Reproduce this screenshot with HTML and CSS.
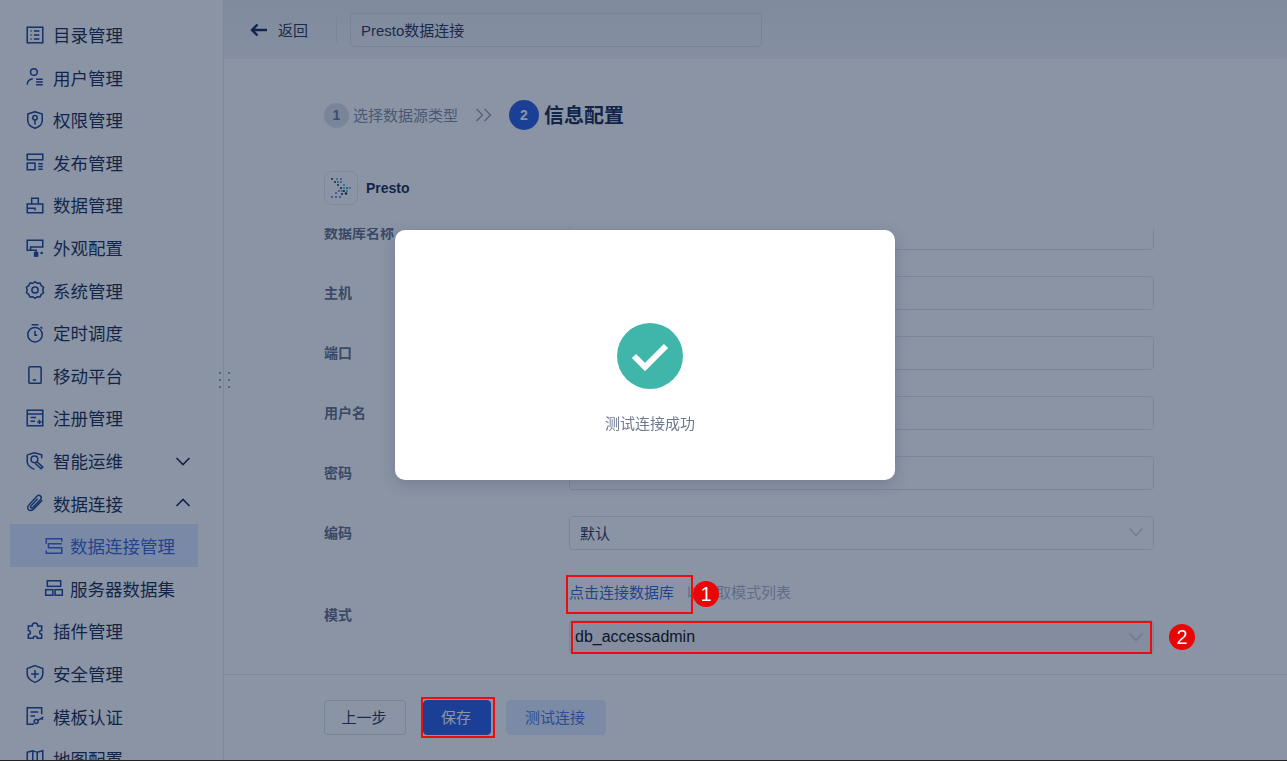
FILE: index.html
```html
<!DOCTYPE html>
<html lang="zh-CN">
<head>
    <meta charset="UTF-8">
    <title>Presto数据连接</title>
    <link rel="stylesheet" href="styles.css">
</head>
<body>
    <div class="app">
        <!-- Left menu -->
        <aside class="sidebar">
            <div class="nav-item"><svg class="nav-icon" viewBox="0 0 18 18"><rect x="2" y="2" width="14" height="14"/><path d="M5 5.500h1M8 5.500h5M5 9h1M8 9h5M5 12.500h1M8 12.500h5"/></svg>目录管理</div>
            <div class="nav-item"><svg class="nav-icon" viewBox="0 0 18 18"><circle cx="8" cy="4.500" r="3"/><path d="M2 16c0-3 2-5 5-5.500M10 11h6M10 13.500h6M10 16h6"/></svg>用户管理</div>
            <div class="nav-item"><svg class="nav-icon" viewBox="0 0 18 18"><path d="M9 1.500l6.500 2.200v6c0 3.300-3 5.600-6.500 6.800-3.500-1.200-6.500-3.500-6.500-6.800v-6z"/><circle cx="9" cy="7" r="2"/><path d="M9 9v4"/></svg>权限管理</div>
            <div class="nav-item"><svg class="nav-icon" viewBox="0 0 18 18"><rect x="2" y="2" width="14" height="5"/><rect x="2" y="10" width="7" height="6"/><path d="M12 10.500h4M12 13h4M12 15.500h4"/></svg>发布管理</div>
            <div class="nav-item"><svg class="nav-icon" viewBox="0 0 18 18"><path d="M2 8h14v8H2zM6 8V3h6v5M2 12h7v2"/></svg>数据管理</div>
            <div class="nav-item"><svg class="nav-icon" viewBox="0 0 18 18"><path d="M2 2h14v6H5v3H2zM5 11h5v2"/><path class="solid" d="M8 12.500h4V17H8z"/><circle class="solid" cx="15" cy="13.500" r="1.200"/></svg>外观配置</div>
            <div class="nav-item"><svg class="nav-icon" viewBox="0 0 18 18"><path d="M9 1.500l2 1.500 2.500-.2 1.200 2.300 2 1.500-.7 2.400.7 2.400-2 1.500-1.200 2.300-2.500-.2-2 1.500-2-1.500-2.500.2-1.200-2.300-2-1.500.7-2.400-.7-2.400 2-1.500 1.200-2.300 2.500.2z"/><circle cx="9" cy="9" r="2.800"/></svg>系统管理</div>
            <div class="nav-item"><svg class="nav-icon" viewBox="0 0 18 18"><circle cx="9" cy="10.500" r="6.500"/><path d="M6 1.500h6M9 7v4h2M14 3.500l1.500 1.500"/></svg>定时调度</div>
            <div class="nav-item"><svg class="nav-icon" viewBox="0 0 18 18"><rect x="3.500" y="1.500" width="11" height="15" rx="1"/><path d="M7 13.500h3"/></svg>移动平台</div>
            <div class="nav-item"><svg class="nav-icon" viewBox="0 0 18 18"><rect x="2" y="2" width="14" height="14"/><path d="M2 5.500h14M5 8.500h5M5 12h4M11 12.500h4M13 10.500v4"/></svg>注册管理</div>
            <div class="nav-item"><svg class="nav-icon" viewBox="0 0 18 18"><path d="M8.500 1.500L15 3.500v3M2 3.500l6.500-2M2 3.500v6c0 3.300 2.800 5.600 6.500 7"/><circle cx="8.500" cy="7.500" r="3"/><path d="M10.500 9.500l5.500 5-1.500 1.500-5.500-5"/></svg>智能运维<svg class="nav-arrow" viewBox="0 0 16 16"><path d="M1.500 5l6.500 6.500L14.500 5"/></svg></div>
            <div class="nav-item"><svg class="nav-icon" viewBox="0 0 18 18"><path d="M15.500 6.500l-7.800 8c-1.500 1.500-3.500 1.500-4.500.5s-1-3 .5-4.500l7-7.500c1-1 2.500-1 3.300-.2s.8 2.200-.2 3.200l-6.800 7c-.6.600-1.300.6-1.700.2s-.4-1.100.2-1.700l6-6.300"/></svg>数据连接<svg class="nav-arrow" viewBox="0 0 16 16"><path d="M1.500 11L8 4.500 14.500 11"/></svg></div>
            <div class="nav-sub active"><svg class="nav-icon" viewBox="0 0 18 18"><path d="M2 7V2.500h14V5M16 7H4v3.500h12v5H2V13"/></svg>数据连接管理</div>
            <div class="nav-sub"><svg class="nav-icon" viewBox="0 0 18 18"><rect x="3" y="2.500" width="12" height="5"/><rect x="1.500" y="10.500" width="6.500" height="5"/><rect x="10" y="10.500" width="6.500" height="5"/></svg>服务器数据集</div>
            <div class="nav-item"><svg class="nav-icon" viewBox="0 0 18 18"><path d="M6.500 4.500C6.500 1 11.500 1 11.500 4.500H15v4c-2.500-.6-2.500 4 0 3.500v3.500h-4c.5-2.500-4-2.500-3.500 0H3V12c2.500.5 2.500-4 0-3.500V4.500z"/></svg>插件管理</div>
            <div class="nav-item"><svg class="nav-icon" viewBox="0 0 18 18"><path d="M9 1.500l7 2.500v5c0 3.500-3 6-7 7.500-4-1.500-7-4-7-7.500V4zM5.500 9h7M9 5.500v7"/></svg>安全管理</div>
            <div class="nav-item"><svg class="nav-icon" viewBox="0 0 18 18"><path d="M8 16.500H2v-15h13v6M5 5.500h7M5 9h4"/><circle cx="10" cy="14" r="1.800"/><path d="M11.500 13l5-3M15 11l1 1.500"/></svg>模板认证</div>
            <div class="nav-item"><svg class="nav-icon" viewBox="0 0 18 18"><path d="M2 3l5-1.500L11 3l5-1.500V15l-5 1.500L7 15l-5 1.500zM7 1.500V15M11 3v13.500"/></svg>地图配置</div>
        </aside>

        <main class="main">
            <div class="topbar">
                <div class="back">
                    <svg class="back-icon" viewBox="0 0 18 14"><path d="M17 7H2M7.500 1.500L2 7l5.500 5.500"/></svg>
                    返回
                </div>
                <div class="topbar-sep"></div>
                <div class="title-input">Presto数据连接</div>
            </div>

            <div class="content">
                <div class="steps">
                    <span class="step-num">1</span>
                    <span class="step-label">选择数据源类型</span>
                    <svg class="step-sep" viewBox="0 0 18 14"><path d="M1.500 1l6 6-6 6M9.500 1l6 6-6 6"/></svg>
                    <span class="step-num current">2</span>
                    <span class="step-label current">信息配置</span>
                </div>

                <div class="source">
                    <div class="source-logo">
                        <svg viewBox="0 0 20 21" width="20" height="21">
                            <g fill="#16233f">
                                <circle cx="1" cy="1" r="1"/><circle cx="4" cy="4" r="1"/><circle cx="7" cy="7" r="1"/><circle cx="10" cy="10" r="1.100"/><circle cx="13" cy="13" r="1.100"/><circle cx="15" cy="15.500" r="1.300"/><circle cx="11" cy="16" r="1.100"/>
                            </g>
                            <g fill="#2fb0d8">
                                <circle cx="6" cy="1" r="1"/><circle cx="10" cy="4" r="1.100"/><circle cx="13" cy="7" r="1.100"/><circle cx="16" cy="10" r="1.300"/><circle cx="19" cy="10" r="1"/><circle cx="16" cy="13" r="1.100"/><circle cx="13" cy="10" r="1"/>
                            </g>
                            <g fill="#3f6fd0">
                                <circle cx="10" cy="1" r=".9"/><circle cx="7" cy="4" r=".9"/><circle cx="1" cy="19" r="1"/><circle cx="5" cy="19" r="1"/><circle cx="9" cy="19" r="1"/><circle cx="5" cy="15" r="1"/><circle cx="8" cy="13" r="1"/><circle cx="11" cy="13" r=".9"/>
                            </g>
                        </svg>
                    </div>
                    <span class="source-name">Presto</span>
                </div>

                <div class="form-scroll">
                    <div class="form">
                        <label class="form-label">数据库名称</label>
                        <div class="input"></div>
                        <label class="form-label">主机</label>
                        <div class="input"></div>
                        <label class="form-label">端口</label>
                        <div class="input"></div>
                        <label class="form-label">用户名</label>
                        <div class="input"></div>
                        <label class="form-label">密码</label>
                        <div class="input"></div>
                        <label class="form-label">编码</label>
                        <div class="input select">默认<svg class="select-arrow" viewBox="0 0 16 10"><path d="M1.500 1.500L8 8.500l6.500-7"/></svg></div>
                        <label class="form-label schema-label">模式</label>
                        <div class="schema">
                            <div class="schema-hint"><span class="schema-link">点击连接数据库</span>以获取模式列表</div>
                            <div class="input select disabled">db_accessadmin<svg class="select-arrow" viewBox="0 0 16 10"><path d="M1.500 1.500L8 8.500l6.500-7"/></svg></div>
                        </div>
                    </div>
                </div>
            </div>

            <div class="footer">
                <button class="btn">上一步</button>
                <button class="btn primary">保存</button>
                <button class="btn soft">测试连接</button>
            </div>
        </main>
    </div>

    <div class="drag-handle"><i></i><i></i><i></i><i></i><i></i><i></i></div>

    <!-- Dialog -->
    <div class="mask"></div>
    <div class="dialog">
        <svg class="dialog-icon" viewBox="0 0 66 66">
            <circle cx="33" cy="33" r="33" fill="#40b6ab"/>
            <path d="M17 33l11 11 21-21" fill="none" stroke="#fff" stroke-width="6"/>
        </svg>
        <div class="dialog-text">测试连接成功</div>
    </div>

    <!-- Annotations drawn on the screenshot -->
    <div class="mark mark-link"></div>
    <div class="mark mark-select"></div>
    <div class="mark mark-save"></div>
    <div class="badge badge-one">1</div>
    <div class="badge badge-two">2</div>
</body>
</html>
```

FILE: styles.css
```css
* {
    box-sizing: border-box;
}

html, body {
    margin: 0;
    padding: 0;
    height: 761px;
    overflow: hidden;
}

body {
    font-family: "Liberation Sans", "Noto Sans CJK SC", sans-serif;
    font-size: 15px;
    color: #1d2b4a;
    background: #fff;
    border-bottom: 1px solid #222;
}

.app {
    display: flex;
    height: 760px;
    overflow: hidden;
}

/* Sidebar */
.sidebar {
    width: 224px;
    flex: none;
    padding-top: 13.3px;
    border-right: 1px solid #e3e7ee;
    overflow: hidden;
}

.nav-item, .nav-sub {
    display: flex;
    align-items: center;
    height: 42.6px;
    font-size: 17.5px;
    color: #0c1f45;
    white-space: nowrap;
}

.nav-item {
    padding-left: 25px;
}

.nav-item .nav-icon {
    margin-right: 8px;
}

.nav-sub {
    width: 188px;
    margin-left: 10px;
    padding-left: 34px;
}

.nav-sub .nav-icon {
    margin-right: 6px;
}

.nav-sub.active {
    background: #dde9ff;
    color: #2f5fd0;
}

.nav-icon {
    width: 20px;
    height: 20px;
    flex: none;
    fill: none;
    stroke: #103a8a;
    stroke-width: 1.35;
}

.nav-icon .solid {
    fill: #103a8a;
    stroke: none;
}

.nav-sub.active .nav-icon {
    stroke: #2f5fd0;
}

.nav-arrow {
    width: 16px;
    height: 16px;
    margin-left: 52px;
    fill: none;
    stroke: #0c1f45;
    stroke-width: 1.7;
}

/* Main column */
.main {
    flex: 1;
    display: flex;
    flex-direction: column;
    min-width: 0;
}

.topbar {
    height: 59px;
    flex: none;
    display: flex;
    align-items: center;
    padding-left: 26px;
    background: linear-gradient(#e8ecef, #f2f4f6);
}

.back {
    display: flex;
    align-items: center;
    width: 86px;
    color: #1d2b4a;
}

.back-icon {
    width: 18px;
    height: 14px;
    margin-right: 10px;
    fill: none;
    stroke: #0a2050;
    stroke-width: 2.4;
}

.topbar-sep {
    width: 1px;
    height: 26px;
    background: #dfe3ea;
}

.title-input {
    width: 412px;
    height: 34px;
    margin-left: 13px;
    padding-left: 10px;
    line-height: 33px;
    border: 1px solid #d7dce5;
    border-radius: 4px;
    color: #1d2b4a;
}

.content {
    flex: 1;
    min-height: 0;
    display: flex;
    flex-direction: column;
    padding-left: 100px;
}

.steps {
    display: flex;
    align-items: center;
    height: 30px;
    margin-top: 41px;
}

.step-num {
    width: 25px;
    height: 25px;
    border-radius: 50%;
    background: #dde0e8;
    color: #5f7090;
    font-weight: bold;
    font-size: 14px;
    line-height: 25px;
    text-align: center;
}

.step-num.current {
    width: 30px;
    height: 30px;
    line-height: 30px;
    background: #1f55dd;
    color: #fff;
}

.step-label {
    margin-left: 4px;
    padding-bottom: 1px;
    color: #7b879c;
}

.step-label.current {
    margin-left: 5px;
    padding-bottom: 2px;
    font-size: 20px;
    font-weight: bold;
    color: #0c1f45;
}

.step-sep {
    width: 18px;
    height: 14px;
    margin: 0 16px 0 17px;
    fill: none;
    stroke: #8e99ad;
    stroke-width: 1.4;
}

.source {
    display: flex;
    align-items: center;
    margin-top: 41px;
    height: 34px;
}

.source-logo {
    width: 34px;
    height: 34px;
    display: flex;
    align-items: center;
    justify-content: center;
    border: 1px solid #e3e7ee;
    border-radius: 8px;
}

.source-name {
    margin-left: 8px;
    font-size: 14px;
    font-weight: bold;
    color: #0c1f45;
}

.form-scroll {
    flex: 1;
    min-height: 0;
    margin-top: 23px;
    overflow: hidden;
}

.form {
    display: grid;
    grid-template-columns: 245px 585px;
    row-gap: 26px;
    align-items: center;
    margin-top: -12px;
}

.form-label {
    margin-bottom: 2px;
    font-size: 14px;
    font-weight: bold;
    color: #5a6980;
}

.schema-label {
    margin-bottom: 3px;
}

.input {
    height: 34px;
    border: 1px solid #dfe3ea;
    border-radius: 4px;
    background: #fff;
}

.select {
    display: flex;
    align-items: center;
    justify-content: space-between;
    padding: 0 9px 2px 10px;
}

.select-arrow {
    width: 16px;
    height: 10px;
    fill: none;
    stroke: #c3cad6;
    stroke-width: 1.4;
}

.select.disabled {
    margin-top: 17px;
    padding: 0 9px 0 5px;
    background: #eef0f2;
    color: #000;
    font-size: 16px;
}

.schema-hint {
    height: 20px;
    margin-top: 7px;
    line-height: 20px;
    white-space: nowrap;
    color: #aab3c2;
}

.schema-link {
    margin-right: 12px;
    color: #2f5fd0;
}

.footer {
    height: 86px;
    flex: none;
    display: flex;
    align-items: flex-start;
    padding: 25px 0 0 100px;
    border-top: 1px solid #e3e7ee;
}

.btn {
    height: 35px;
    padding: 0 2px 2px 0;
    font: inherit;
    color: #1d2b4a;
    background: #fff;
    border: 1px solid #d7dce5;
    border-radius: 4px;
}

.btn:first-child {
    width: 82px;
}

.btn.primary {
    width: 68px;
    margin-left: 17px;
    border-color: #1f55dd;
    background: #1f55dd;
    color: #fff;
}

.btn.soft {
    width: 100px;
    margin-left: 15px;
    border-color: #dfeaff;
    background: #dfeaff;
    color: #3f6fe0;
}

/* Handle sits over the sidebar border */
.drag-handle {
    position: absolute;
    left: 219px;
    top: 372px;
    display: grid;
    grid-template-columns: 2px 2px;
    column-gap: 7px;
    row-gap: 5px;
}

.drag-handle i {
    width: 2px;
    height: 2px;
    background: #8fa0bf;
}

/* Dialog */
.mask {
    position: fixed;
    left: 0;
    top: 0;
    width: 1287px;
    height: 760px;
    background: rgba(23, 41, 75, .5);
}

.dialog {
    position: fixed;
    left: 395px;
    top: 230px;
    width: 500px;
    height: 250px;
    display: flex;
    flex-direction: column;
    align-items: center;
    padding: 93px 0 0 10px;
    background: #fff;
    border-radius: 10px;
    box-shadow: 0 4px 16px rgba(23, 41, 75, .2);
}

.dialog-icon {
    width: 66px;
    height: 66px;
}

.dialog-text {
    margin-top: 25px;
    line-height: 20px;
    color: #6e7a90;
}

/* Red review marks */
.mark {
    position: fixed;
    border: 2px solid #ee0c0c;
}

.mark-link {
    left: 566px;
    top: 575px;
    width: 127px;
    height: 39px;
}

.mark-select {
    left: 571px;
    top: 621px;
    width: 581px;
    height: 33px;
}

.mark-save {
    left: 421px;
    top: 697px;
    width: 74px;
    height: 41px;
}

.badge {
    position: fixed;
    width: 26px;
    height: 26px;
    border-radius: 50%;
    background: #ea0606;
    color: #fff;
    font-size: 20px;
    line-height: 26px;
    text-align: center;
}

.badge-one {
    left: 693px;
    top: 581px;
}

.badge-two {
    left: 1169px;
    top: 624px;
}
```
